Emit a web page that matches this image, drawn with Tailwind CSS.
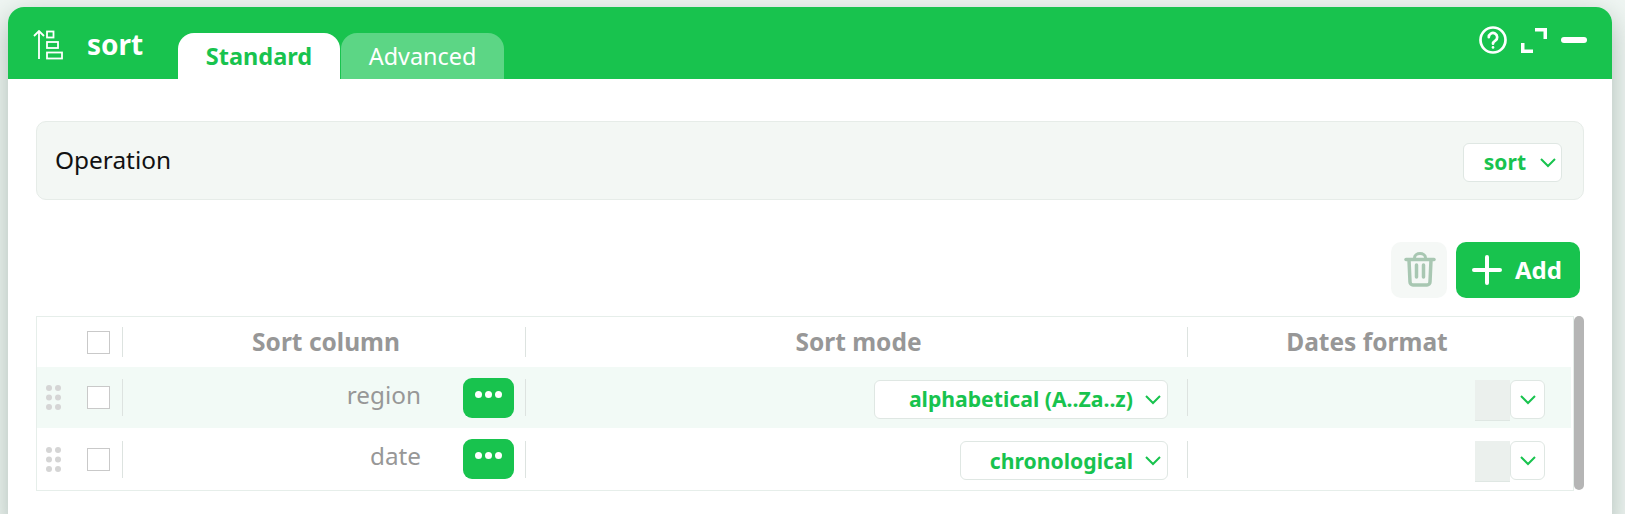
<!DOCTYPE html>
<html lang="en">
<head>
    <meta charset="UTF-8" />
    <title>sort</title>
    <script src="https://cdn.jsdelivr.net/npm/@tailwindcss/browser@4"></script>
</head>
<body class="bg-[#f0f6f3] h-[514px] overflow-hidden font-['Noto_Sans',sans-serif]">

<div class="pt-[7px] pl-2 w-[1612px]">
  <div class="w-[1604px] h-[520px] bg-white rounded-t-[16px] shadow-[0_10px_30px_rgba(70,100,85,0.4)]">

    <!-- header -->
    <div class="h-[72px] bg-[#18c34e] rounded-t-[16px] flex items-end text-white relative">
      <svg class="absolute left-[25px] top-[23px]" width="32" height="32" viewBox="0 0 32 32" fill="none" stroke="white" stroke-width="1.800">
        <path d="M6 1v28M1 6l5-5 5 5" />
        <rect x="14" y="1.500" width="6.500" height="6" />
        <rect x="14" y="12" width="11" height="6" />
        <rect x="14" y="22.500" width="15" height="6" />
      </svg>
      <div class="w-[170px] pl-[79px] self-start pt-[18px] text-[28px] font-bold leading-[38px]">sort</div>
      <div class="w-[162px] h-[46px] pt-[1px] bg-white rounded-t-[16px] text-[#18c34e] text-[23.500px] font-bold flex items-center justify-center">Standard</div>
      <div class="ml-px w-[163px] h-[46px] pt-[1px] bg-[#5cd685] rounded-t-[16px] text-[23.400px] flex items-center justify-center">Advanced</div>
      <div class="ml-auto self-start pt-[19px] pr-[25px] flex items-start gap-[14px]">
        <svg width="28" height="28" viewBox="0 0 28 28" fill="none" stroke="white" stroke-width="2.700" stroke-linecap="round">
          <circle cx="14" cy="14" r="12.500" />
          <path d="M9.800 11.200a4.200 4.200 0 1 1 6.500 3.500c-1.500 1-2.300 1.600-2.300 3" />
          <path d="M14 21.300v.2" />
        </svg>
        <svg class="mt-[2px]" width="26" height="26" viewBox="0 0 26 26" fill="none" stroke="white" stroke-width="3.500">
          <path d="M14 1.750h10.250v9.250" />
          <path d="M1.750 15v8.250h10.250" />
        </svg>
        <div class="w-[26px] h-[6px] mt-[11px] bg-white rounded-full"></div>
      </div>
    </div>

    <div class="px-[28px]">
      <!-- operation -->
      <div class="mt-[42px] w-[1548px] h-[79px] bg-[#f3f7f4] border border-[#e6ece8] rounded-[10px] flex items-center justify-between pl-[18px] pr-[21px]">
        <span class="text-[24.400px] text-[#111] mb-[1px]">Operation</span>
        <div class="w-[99px] h-[39px] mt-[4px] bg-white border border-[#dfe7e3] rounded-[6px] flex items-center justify-end pr-[5px] text-[#18c34e] text-[21px] font-bold">
          <span class="mr-[14px]">sort</span>
          <svg width="16" height="10" viewBox="0 0 16 10" fill="none" stroke="#18c34e" stroke-width="2"><path d="M1 1l7 7 7-7" /></svg>
        </div>
      </div>

      <!-- toolbar -->
      <div class="mt-[42px] w-[1544px] flex justify-end gap-[9px]">
        <div class="w-[56px] h-[56px] bg-[#f5f8f6] rounded-[10px] flex items-center justify-center">
          <svg class="ml-[1px]" width="32" height="36" viewBox="0 0 32 36" fill="none" stroke="#a8c7b2" stroke-width="3.500" stroke-linecap="round" stroke-linejoin="round">
            <path d="M2 7.500h28" />
            <path d="M10.500 6c0-6 11-6 11 0" stroke-width="3" />
            <path d="M5 8l1 22a3 3 0 0 0 3 3h14a3 3 0 0 0 3-3L27 8" />
            <path d="M12.500 13v12M19.500 13v12" />
          </svg>
        </div>
        <div class="w-[124px] h-[56px] bg-[#18c34e] rounded-[10px] flex items-center pl-[16px] text-white text-[24px] font-bold">
          <svg width="30" height="30" viewBox="0 0 30 30" fill="none" stroke="white" stroke-width="4" stroke-linecap="round"><path d="M15 2v26M2 15h26" /></svg>
          <span class="ml-[13px]">Add</span>
        </div>
      </div>

      <!-- table -->
      <div class="mt-[18px] flex">
        <div class="w-[1539px] h-[175px] border border-[#e6eeea] text-[#979797]">

          <div class="h-[50px] flex items-center text-[24.500px] font-bold">
            <div class="w-[73px] flex justify-end"><div class="w-[23px] h-[23px] border border-[#c9c9c9]"></div></div>
            <div class="w-[13px] h-[30px] border-r border-[#dde3e0]"></div>
            <div class="w-[403px] h-[30px] pl-[4px] border-r border-[#dde3e0] flex items-center justify-center leading-[30px]"><span class="mb-[1px]">Sort column</span></div>
            <div class="w-[662px] h-[30px] pl-[4px] border-r border-[#dde3e0] flex items-center justify-center leading-[30px]"><span class="mb-[1px]">Sort mode</span></div>
            <div class="w-[358px] flex justify-center leading-[30px]"><span class="mb-[1px]">Dates format</span></div>
          </div>

          <div class="h-[61px] w-[1534px] bg-[#f2faf6] flex items-center">
            <div class="w-[73px] flex items-center">
              <svg class="ml-[9px]" width="15" height="25" viewBox="0 0 15 25" fill="#d5d5d5"><circle cx="3" cy="3" r="3"/><circle cx="12" cy="3" r="3"/><circle cx="3" cy="12.500" r="3"/><circle cx="12" cy="12.500" r="3"/><circle cx="3" cy="22" r="3"/><circle cx="12" cy="22" r="3"/></svg>
              <div class="ml-auto w-[23px] h-[23px] bg-white border border-[#c9c9c9]"></div>
            </div>
            <div class="w-[13px] h-[37px] border-r border-[#dde3e0]"></div>
            <div class="w-[403px] h-[37px] border-r border-[#dde3e0] flex items-center justify-end pr-[11px]">
              <span class="text-[24.300px] mr-[42px] mb-[4px]">region</span>
              <div class="w-[51px] h-[40px] bg-[#18c34e] rounded-[9px] flex items-start justify-center gap-[3px] pt-[13px]">
                <i class="w-[7px] h-[7px] rounded-full bg-white"></i><i class="w-[7px] h-[7px] rounded-full bg-white"></i><i class="w-[7px] h-[7px] rounded-full bg-white"></i>
              </div>
            </div>
            <div class="w-[662px] h-[37px] border-r border-[#dde3e0] flex items-center justify-end pr-[19px]">
              <div class="w-[294px] h-[39px] mt-[4px] shrink-0 bg-white border border-[#dfe7e3] rounded-[6px] flex items-center justify-end pr-[6px] text-[#18c34e] text-[21.200px] font-bold">
                <span class="mr-[12px] mb-[1px]">alphabetical (A..Za..z)</span>
                <svg width="16" height="10" viewBox="0 0 16 10" fill="none" stroke="#18c34e" stroke-width="2"><path d="M1 1l7 7 7-7" /></svg>
              </div>
            </div>
            <div class="w-[383px] flex items-start justify-end pr-[26px] mt-[6px]">
              <div class="w-[35px] h-[41px] bg-[#ebf0ed] border-b border-[#dfe7e3]"></div>
              <div class="w-[35px] h-[39px] bg-white border border-[#dfe7e3] rounded-[6px] flex items-center justify-center">
                <svg width="16" height="10" viewBox="0 0 16 10" fill="none" stroke="#18c34e" stroke-width="2"><path d="M1 1l7 7 7-7" /></svg>
              </div>
            </div>
          </div>

          <div class="h-[62px] w-[1534px] flex items-center">
            <div class="w-[73px] flex items-center">
              <svg class="ml-[9px]" width="15" height="25" viewBox="0 0 15 25" fill="#d5d5d5"><circle cx="3" cy="3" r="3"/><circle cx="12" cy="3" r="3"/><circle cx="3" cy="12.500" r="3"/><circle cx="12" cy="12.500" r="3"/><circle cx="3" cy="22" r="3"/><circle cx="12" cy="22" r="3"/></svg>
              <div class="ml-auto w-[23px] h-[23px] bg-white border border-[#c9c9c9]"></div>
            </div>
            <div class="w-[13px] h-[37px] border-r border-[#dde3e0]"></div>
            <div class="w-[403px] h-[37px] border-r border-[#dde3e0] flex items-center justify-end pr-[11px]">
              <span class="text-[24.300px] mr-[42px] mb-[6px]">date</span>
              <div class="w-[51px] h-[40px] bg-[#18c34e] rounded-[9px] flex items-start justify-center gap-[3px] pt-[13px]">
                <i class="w-[7px] h-[7px] rounded-full bg-white"></i><i class="w-[7px] h-[7px] rounded-full bg-white"></i><i class="w-[7px] h-[7px] rounded-full bg-white"></i>
              </div>
            </div>
            <div class="w-[662px] h-[37px] border-r border-[#dde3e0] flex items-center justify-end pr-[19px]">
              <div class="w-[208px] h-[39px] mt-[3px] shrink-0 bg-white border border-[#dfe7e3] rounded-[6px] flex items-center justify-end pr-[6px] text-[#18c34e] text-[21.200px] font-bold">
                <span class="mr-[12px]">chronological</span>
                <svg width="16" height="10" viewBox="0 0 16 10" fill="none" stroke="#18c34e" stroke-width="2"><path d="M1 1l7 7 7-7" /></svg>
              </div>
            </div>
            <div class="w-[383px] flex items-start justify-end pr-[26px] mt-[5px]">
              <div class="w-[35px] h-[41px] bg-[#ebf0ed] border-b border-[#dfe7e3]"></div>
              <div class="w-[35px] h-[39px] bg-white border border-[#dfe7e3] rounded-[6px] flex items-center justify-center">
                <svg width="16" height="10" viewBox="0 0 16 10" fill="none" stroke="#18c34e" stroke-width="2"><path d="M1 1l7 7 7-7" /></svg>
              </div>
            </div>
          </div>
        </div>
        <div class="w-[10px] h-[174px] bg-[#b5b5b5] rounded-full"></div>
      </div>
    </div>
  </div>
</div>

</body>
</html>
